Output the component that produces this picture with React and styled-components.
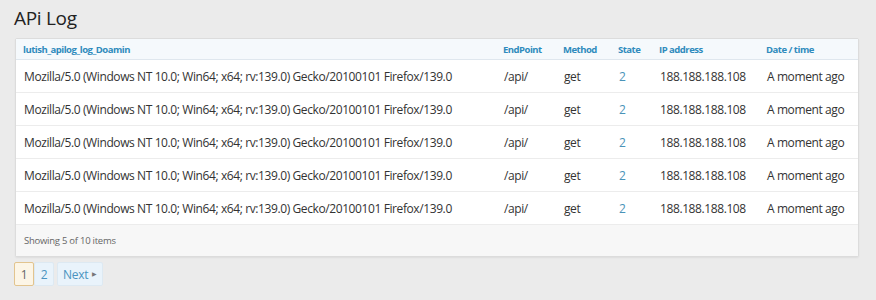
import React from 'react';
import styled, { createGlobalStyle } from 'styled-components';

const GlobalStyle = createGlobalStyle`
  body {
    margin: 0;
    background: #ebebeb;
    font-family: 'Open Sans', 'Liberation Sans', sans-serif;
    color: #333;
  }
`;

const Page = styled.div`
  padding: 6px 17px 0 14px;
`;

const Title = styled.h1`
  margin: 0 0 8px;
  font-size: 19px;
  font-weight: 400;
  letter-spacing: -0.3px;
  line-height: 24px;
  color: #222;
`;

const Panel = styled.div`
  margin-left: 1px;
  background: #fff;
  border: 1px solid #dcdcdc;
  border-radius: 2px;
  box-shadow: 0 1px 2px rgba(0, 0, 0, 0.06);
`;

const Row = styled.div`
  display: grid;
  grid-template-columns: 480px 60px 55px 41px 107px 1fr;
  align-items: center;
  height: ${p => (p.head ? '20px' : '32px')};
  background: ${p => (p.head ? '#f5f9fc' : '#fff')};
  border-bottom: 1px solid ${p => (p.head ? '#dfe7ee' : '#ececec')};
`;

const Cell = styled.div`
  padding-left: ${p => (p.head ? '7px' : '8px')};
  white-space: nowrap;
  font-size: ${p => (p.head ? '9.5px' : '12px')};
  letter-spacing: ${p => (p.head ? '-0.5px' : '-0.4px')};
  font-weight: ${p => (p.head ? 700 : 400)};
  color: ${p => (p.head ? '#2f8bbd' : p.link ? '#4a93b8' : '#333')};
`;

const Footer = styled.div`
  height: 31px;
  display: flex;
  align-items: center;
  padding-left: 8px;
  background: #f7f7f7;
  font-size: 9.5px;
  letter-spacing: -0.25px;
  color: #666;
`;

const Pager = styled.div`
  display: flex;
  margin-top: 5px;
  font-size: 12px;
  letter-spacing: -0.3px;
`;

const PageButton = styled.div`
  display: flex;
  align-items: center;
  justify-content: center;
  height: 22px;
  min-width: ${p => (p.wide ? '44px' : '18px')};
  margin-left: ${p => (p.gap ? '3px' : '0')};
  border: 1px solid ${p => (p.active ? '#e2c48e' : '#dde9f2')};
  background: ${p => (p.active ? '#fcf5e6' : '#e9f3fb')};
  color: ${p => (p.active ? '#666' : '#4a93c0')};
  border-radius: 2px;
`;

const Caret = styled.span`
  font-size: 6px;
  margin-left: 4px;
  color: #777;
`;

const ua = 'Mozilla/5.0 (Windows NT 10.0; Win64; x64; rv:139.0) Gecko/20100101 Firefox/139.0';
const rows = Array.from({ length: 5 }, () => ({
  domain: ua,
  endpoint: '/api/',
  method: 'get',
  state: 2,
  ip: '188.188.188.108',
  time: 'A moment ago',
}));

export default function App() {
  return (
    <Page>
      <GlobalStyle />
      <Title>APi Log</Title>
      <Panel>
        <Row head>
          <Cell head>lutish_apilog_log_Doamin</Cell>
          <Cell head>EndPoint</Cell>
          <Cell head>Method</Cell>
          <Cell head>State</Cell>
          <Cell head>IP address</Cell>
          <Cell head>Date / time</Cell>
        </Row>
        {rows.map((r, i) => (
          <Row key={i}>
            <Cell>{r.domain}</Cell>
            <Cell>{r.endpoint}</Cell>
            <Cell>{r.method}</Cell>
            <Cell link>{r.state}</Cell>
            <Cell>{r.ip}</Cell>
            <Cell>{r.time}</Cell>
          </Row>
        ))}
        <Footer>Showing 5 of 10 items</Footer>
      </Panel>
      <Pager>
        <PageButton active>1</PageButton>
        <PageButton>2</PageButton>
        <PageButton wide gap>
          Next<Caret>▶</Caret>
        </PageButton>
      </Pager>
    </Page>
  );
}
